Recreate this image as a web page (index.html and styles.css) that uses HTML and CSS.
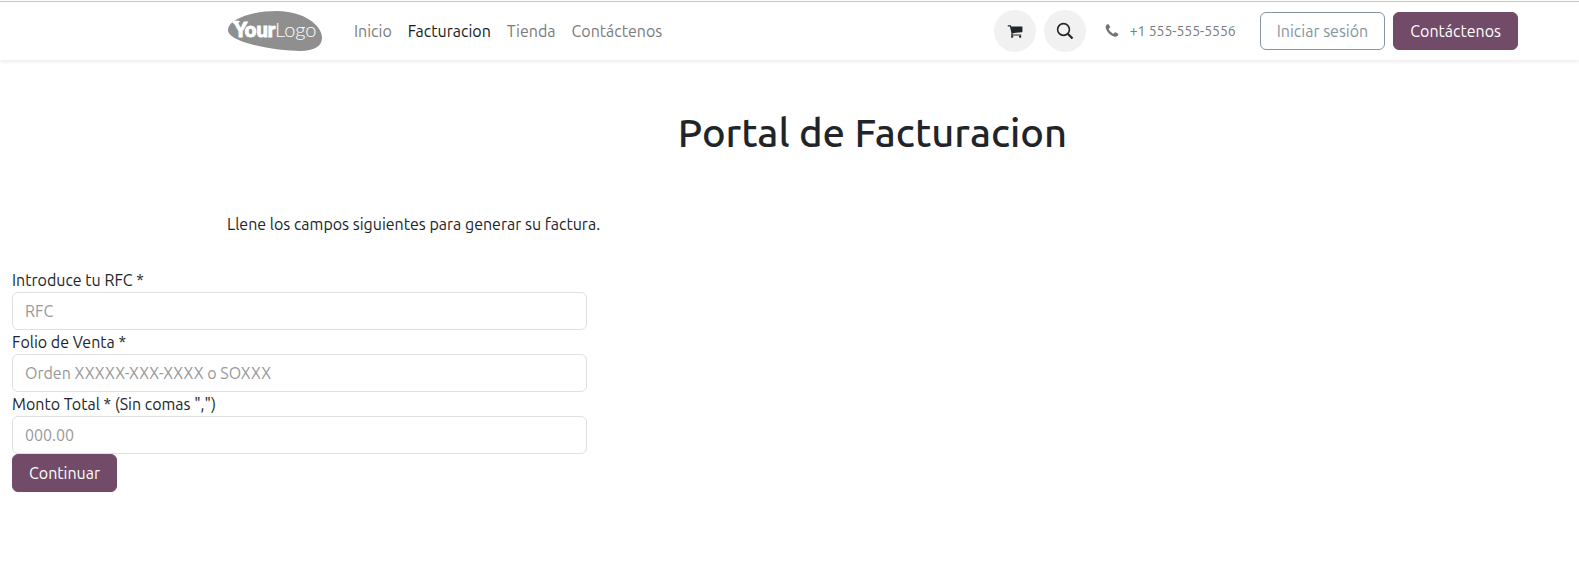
FILE: index.html
```html
<!DOCTYPE html>
<html lang="es">
<head>
<meta charset="utf-8">
<meta name="viewport" content="width=device-width, initial-scale=1">
<title>Portal de Facturacion</title>
<link rel="stylesheet" href="styles.css">
</head>
<body>
<header class="header">
  <a class="logo" href="#" aria-label="YourLogo">
    <svg width="95" height="42" viewBox="0 0 95 42">
      <path fill="#8f8f8f" d="M1 20C1 9 25 1 50 1C76 1 95 15 95 28C95 36 87 41 73 41C50 41 1 33 1 20Z"/>
      <path fill="#fff" d="M4 10L13 11L10 15L7 14L5 12Z"/>
      <text class="logo-bold" x="7" y="27">Your</text>
      <text class="logo-thin" x="48" y="27">Logo</text>
    </svg>
  </a>
  <nav class="nav">
    <a class="nav-link" href="#">Inicio</a>
    <a class="nav-link nav-link-active" href="#">Facturacion</a>
    <a class="nav-link" href="#">Tienda</a>
    <a class="nav-link" href="#">Contáctenos</a>
  </nav>
  <div class="actions">
    <a class="round" href="#" aria-label="Carrito">
      <svg width="16" height="16" viewBox="0 0 1792 1792" fill="#212529"><path d="M704 1536q0 52-38 90t-90 38-90-38-38-90 38-90 90-38 90 38 38 90zm896 0q0 52-38 90t-90 38-90-38-38-90 38-90 90-38 90 38 38 90zm128-1088v512q0 24-16.500 42.500t-40.500 21.500l-1044 122q13 60 13 70 0 16-24 64h920q26 0 45 19t19 45-19 45-45 19h-1024q-26 0-45-19t-19-45q0-11 8-31.500t16-36 21.500-40 15.500-29.500l-177-823h-204q-26 0-45-19t-19-45 19-45 45-19h256q16 0 28.500 6.500t19.500 15.500 13 24.500 8 26 5.500 29.500 4.500 26h1201q26 0 45 19t19 45z"/></svg>
    </a>
    <button class="round" type="button" aria-label="Buscar">
      <svg width="18" height="18" viewBox="0 0 18 18" fill="none" stroke="#212529" stroke-width="1.600"><circle cx="7.500" cy="7.500" r="5.900"/><path d="M11.800 11.800L16.500 16.500" stroke-width="2.200"/></svg>
    </button>
    <a class="phone" href="tel:+15555555556">
      <svg width="16" height="16" viewBox="0 0 1792 1792" fill="#707275"><path d="M1600 1240q0 27-10 70.500t-21 68.500q-21 50-122 106-94 51-186 51-27 0-53-3.500t-57.500-12.500-47-14.500-55.500-20.500-49-18q-98-35-175-83-127-79-264-216t-216-264q-48-77-83-175-3-9-18-49t-20.500-55.500-14.500-47-12.500-57.500-3.500-53q0-92 51-186 56-101 106-122 25-11 68.500-21t70.500-10q14 0 21 3 18 6 53 76 11 19 30 54t35 63.500 31 53.500q3 4 17.500 25t21.500 35.500 7 28.500q0 20-28.500 50t-62 55-62 53-28.500 46q0 9 5 22.500t8.500 20.500 14 24 11.500 19q76 137 174 235t235 174q2 1 19 11.500t24 14 20.500 8.500 22.500 5q18 0 46-28.500t53-62 55-62 50-28.500q14 0 28.500 7t35.500 21.500 25 17.500q25 15 53.500 31t63.500 35 54 30q70 35 76 53 3 7 3 21z"/></svg>
      <span>+1 555-555-5556</span>
    </a>
    <div class="buttons">
      <a class="btn btn-outline" href="#">Iniciar sesión</a>
      <a class="btn btn-primary" href="#">Contáctenos</a>
    </div>
  </div>
</header>
<main>
  <section class="intro">
    <h1 class="title">Portal de Facturacion</h1>
    <p class="lead">Llene los campos siguientes para generar su factura.</p>
  </section>
  <form class="form">
    <label class="label" for="rfc">Introduce tu RFC *</label>
    <input class="input" id="rfc" type="text" placeholder="RFC">
    <label class="label" for="folio">Folio de Venta *</label>
    <input class="input" id="folio" type="text" placeholder="Orden XXXXX-XXX-XXXX o SOXXX">
    <label class="label" for="monto">Monto Total * (Sin comas ",")</label>
    <input class="input" id="monto" type="text" placeholder="000.00">
    <button class="btn btn-primary" type="button">Continuar</button>
  </form>
</main>
</body>
</html>
```
FILE: styles.css
```css
* {
  box-sizing: border-box;
}

body {
  margin: 0;
  background: #fff;
  color: #212529;
  font-family: Ubuntu, "Noto Sans", sans-serif;
  font-size: 16px;
  line-height: 24px;
}

a {
  color: inherit;
  text-decoration: none;
}

svg {
  display: block;
}

.header {
  display: flex;
  align-items: center;
  margin-top: 1px;
  padding: 8px 61px 8px 227px;
  border-top: 1px solid #c2c7c6;
  box-shadow: 0 2px 4px rgba(0, 0, 0, 0.08);
}

.logo-bold,
.logo-thin {
  fill: #fff;
  font-family: Lato, sans-serif;
  font-size: 20px;
}

.logo-bold {
  font-weight: 900;
  stroke: #fff;
  stroke-width: 1px;
}

.logo-thin {
  font-weight: 300;
}

.nav {
  display: flex;
  gap: 16px;
  margin-left: 32px;
  color: #7a7b7d;
}

.nav-link-active {
  color: #17191b;
}

.actions {
  display: flex;
  align-items: center;
  gap: 8px;
  margin-left: auto;
}

.round {
  display: flex;
  align-items: center;
  justify-content: center;
  width: 42px;
  height: 42px;
  padding: 0;
  border: 0;
  border-radius: 50%;
  background: #f1f1f1;
}

.phone {
  display: flex;
  align-items: center;
  gap: 10px;
  margin: 0 16px 0 10px;
  color: #7a7b7d;
  font-size: 14px;
}

.buttons {
  display: flex;
  gap: 8px;
}

.btn {
  padding: 6px 16px;
  border: 1px solid #714b67;
  border-radius: 6px;
  font: inherit;
  text-align: center;
}

.btn-primary {
  background: #714b67;
  color: #fff;
}

.btn-outline {
  border-color: #8595a2;
  color: #8595a2;
}

.intro {
  padding: 48px 61px 32px 227px;
}

.title {
  margin: 0 0 54px;
  font-size: 40px;
  font-weight: 500;
  line-height: 50px;
  text-align: center;
}

.lead {
  margin: 0;
}

.form {
  display: flex;
  flex-direction: column;
  align-items: flex-start;
  padding: 0 12px;
}

.input {
  width: 37%;
  height: 38px;
  padding: 6px 12px;
  border: 1px solid #dee0e2;
  border-radius: 6px;
  background: #fff;
  color: inherit;
  font: inherit;
}

.input::placeholder {
  color: #97999b;
  opacity: 1;
}
```
